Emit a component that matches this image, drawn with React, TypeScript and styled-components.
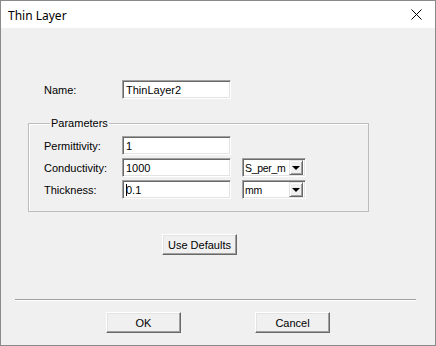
import styled, { createGlobalStyle } from "styled-components";

const Global = createGlobalStyle`
  html, body {
    margin: 0;
    padding: 0;
    background: #f0f0f0;
  }
  * {
    box-sizing: border-box;
  }
`;

const S = {
  Window: styled.div`
    width: 436px;
    height: 346px;
    display: flex;
    flex-direction: column;
    border: 1px solid #8a8a8a;
    background: #f0f0f0;
    font-family: "Liberation Sans", Arial, sans-serif;
    font-size: 11px;
    color: #000;
  `,
  TitleBar: styled.div`
    height: 27px;
    display: flex;
    align-items: center;
    justify-content: space-between;
    padding: 0 12px 0 7px;
    background: #fff;
  `,
  Title: styled.div`
    font-family: "Noto Sans", "Open Sans", sans-serif;
    font-size: 12px;
    color: #000;
    padding-top: 2px;
  `,
  Close: styled.div`
    width: 30px;
    height: 27px;
    display: flex;
    align-items: center;
    justify-content: center;
    margin-right: -8px;
  `,
  Body: styled.div`
    flex: 1;
    display: flex;
    flex-direction: column;
    padding-top: 52px;
  `,
  Row: styled.div<{ $indent?: number }>`
    display: flex;
    align-items: center;
    height: 19px;
    padding-left: ${(p) => p.$indent ?? 0}px;
  `,
  Label: styled.div`
    width: 78px;
    padding-top: 1px;
  `,
  TextBox: styled.div<{ $width?: number }>`
    width: ${(p) => p.$width ?? 109}px;
    height: 19px;
    display: flex;
    align-items: center;
    padding: 1px 0 0 3px;
    background: #fff;
    border: 1px solid;
    border-color: #a0a0a0 #fff #fff #a0a0a0;
    box-shadow: inset 1px 1px 0 #696969, inset -1px -1px 0 #e3e3e3;
    white-space: nowrap;
    overflow: hidden;
  `,
  Caret: styled.span`
    display: inline-block;
    width: 1px;
    height: 12px;
    background: #000;
    margin-right: -1px;
  `,
  Group: styled.fieldset`
    margin: 18px 0 0 27px;
    width: 341px;
    padding: 6px 0 12px 15px;
    border: 1px solid #bdbdbd;
    box-shadow: inset 1px 1px 0 #fff;
    display: flex;
    flex-direction: column;
    gap: 3px;
  `,
  Legend: styled.legend`
    margin-left: 6px;
    padding: 0 1px;
    line-height: 13px;
  `,
  Select: styled.div`
    margin-left: 11px;
    width: 64px;
    height: 19px;
    display: flex;
    align-items: center;
    justify-content: space-between;
    padding: 2px 2px 2px 2px;
    background: #fff;
    border: 1px solid;
    border-color: #a0a0a0 #fff #fff #a0a0a0;
    box-shadow: inset 1px 1px 0 #696969, inset -1px -1px 0 #e3e3e3;
  `,
  SelectText: styled.span`
    padding-top: 1px;
    font-size: 10.5px;
    letter-spacing: -0.3px;
    white-space: nowrap;
    overflow: hidden;
  `,
  Arrow: styled.div`
    flex: none;
    width: 14px;
    height: 15px;
    display: flex;
    align-items: center;
    justify-content: center;
    background: #f0f0f0;
    border: 1px solid;
    border-color: #e3e3e3 #696969 #696969 #e3e3e3;
    box-shadow: inset 1px 1px 0 #fff, inset -1px -1px 0 #a0a0a0;
  `,
  Triangle: styled.div`
    width: 0;
    height: 0;
    border-left: 4px solid transparent;
    border-right: 4px solid transparent;
    border-top: 4px solid #000;
  `,
  Button: styled.button<{ $left: number; $top: number }>`
    margin-left: ${(p) => p.$left}px;
    margin-top: ${(p) => p.$top}px;
    width: 75px;
    height: 21px;
    padding: 0;
    font-family: "Liberation Sans", Arial, sans-serif;
    font-size: 11px;
    color: #000;
    background: #f0f0f0;
    border: 1px solid;
    border-color: #fff #696969 #696969 #fff;
    box-shadow: inset -1px -1px 0 #a0a0a0, inset 1px 1px 0 #e3e3e3;
  `,
  Separator: styled.div`
    margin: 44px 0 0 14px;
    width: 401px;
    height: 2px;
    border-top: 1px solid #a0a0a0;
    border-bottom: 1px solid #fff;
  `,
  Footer: styled.div`
    display: flex;
  `,
};

const CloseIcon = () => (
  <svg width="11" height="11" viewBox="0 0 11 11">
    <path d="M0.5 0.5 L10.5 10.5 M10.5 0.5 L0.5 10.5" stroke="#000" strokeWidth="1" />
  </svg>
);

const Combo = ({ value }: { value: string }) => (
  <S.Select>
    <S.SelectText>{value}</S.SelectText>
    <S.Arrow>
      <S.Triangle />
    </S.Arrow>
  </S.Select>
);

export default function App() {
  return (
    <>
      <Global />
      <S.Window>
        <S.TitleBar>
          <S.Title>Thin Layer</S.Title>
          <S.Close>
            <CloseIcon />
          </S.Close>
        </S.TitleBar>
        <S.Body>
          <S.Row $indent={43}>
            <S.Label>Name:</S.Label>
            <S.TextBox>ThinLayer2</S.TextBox>
          </S.Row>

          <S.Group>
            <S.Legend>Parameters</S.Legend>
            <S.Row>
              <S.Label>Permittivity:</S.Label>
              <S.TextBox>1</S.TextBox>
            </S.Row>
            <S.Row>
              <S.Label>Conductivity:</S.Label>
              <S.TextBox>1000</S.TextBox>
              <Combo value="S_per_m" />
            </S.Row>
            <S.Row>
              <S.Label>Thickness:</S.Label>
              <S.TextBox>
                <S.Caret />
                0.1
              </S.TextBox>
              <Combo value="mm" />
            </S.Row>
          </S.Group>

          <S.Button $left={161} $top={22}>Use Defaults</S.Button>

          <S.Separator />

          <S.Footer>
            <S.Button $left={105} $top={11}>OK</S.Button>
            <S.Button $left={74} $top={11}>Cancel</S.Button>
          </S.Footer>
        </S.Body>
      </S.Window>
    </>
  );
}
